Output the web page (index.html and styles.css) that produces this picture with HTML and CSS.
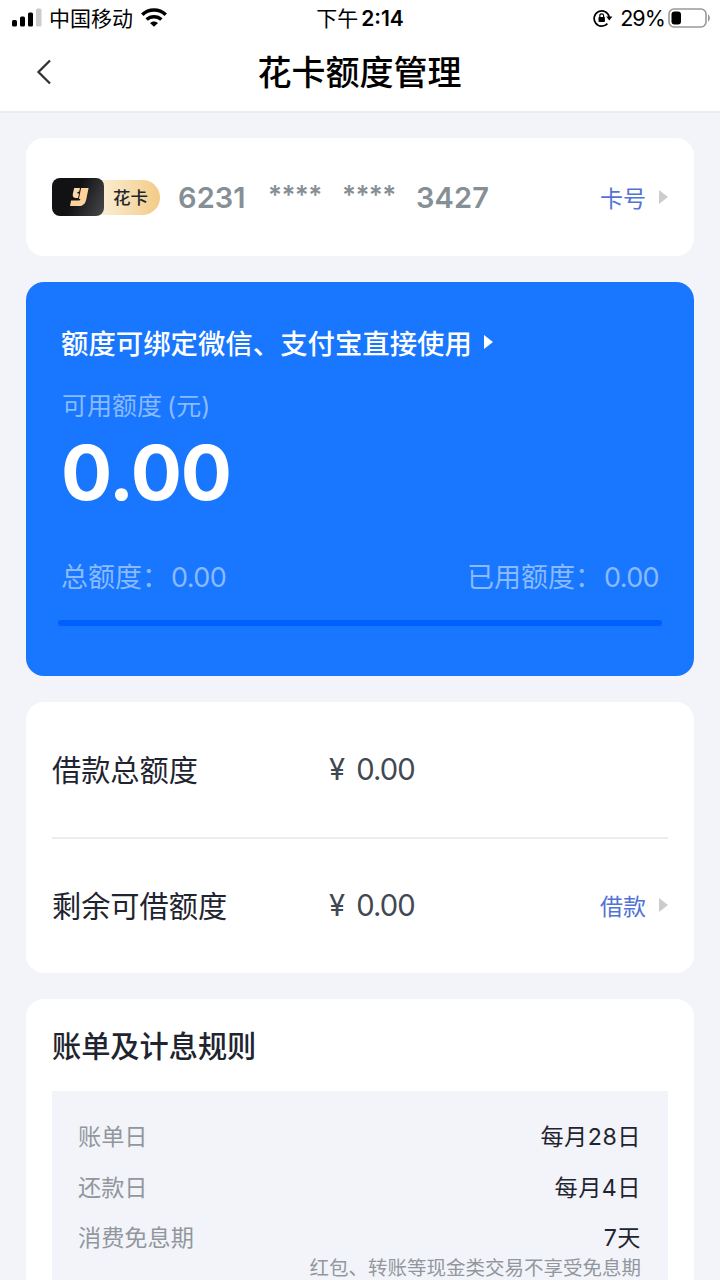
FILE: index.html
```html
<!DOCTYPE html>
<html lang="zh-CN">

<head>
  <meta charset="UTF-8">
  <meta name="viewport" content="width=device-width, initial-scale=1.0">
  <title>花卡额度管理</title>
  <link rel="stylesheet" href="styles.css">
</head>

<body>
  <div class="page">
    <!-- 顶部状态栏和标题 -->
    <header class="header">
      <div class="status">
        <div class="status-left">
          <svg class="signal" width="30" height="20" viewBox="0 0 30 20">
            <rect x="0" y="12" width="5" height="6.5" rx="1.5" />
            <rect x="8" y="8.5" width="5" height="10" rx="1.5" />
            <rect x="16" y="4.5" width="5" height="14" rx="1.5" />
            <rect x="24" y="0.5" width="5.5" height="18" rx="1.5" fill="#ccc" />
          </svg>
          <span class="carrier">中国移动</span>
          <svg class="wifi" width="26" height="20" viewBox="0 0 26 20">
            <path d="M1.3 6.7C7.8 0.5 18.2 0.5 24.7 6.7" fill="none" stroke="#000" stroke-width="3.6" />
            <path d="M5.6 11.6C9.8 7.7 16.2 7.7 20.4 11.6" fill="none" stroke="#000" stroke-width="3.4" />
            <path d="M13 18.8L9 15.1C11.2 12.9 14.8 12.9 17 15.1Z" />
          </svg>
        </div>
        <div class="status-time">下午 <b>2:14</b></div>
        <div class="status-right">
          <svg class="lock" width="20" height="18" viewBox="0 0 20 18">
            <path d="M14.4 14.6A7.6 7.6 0 1 1 16.2 8" fill="none" stroke="#000" stroke-width="1.7" />
            <path d="M13.2 7.6H19.4L16.3 11.6Z" />
            <rect x="5.5" y="8" width="6.4" height="5" rx="0.8" />
            <path d="M6.8 8.4V6.8a1.9 1.9 0 0 1 3.8 0V8.4" fill="none" stroke="#000" stroke-width="1.2" />
          </svg>
          <span class="percent">29%</span>
          <svg class="battery" width="43" height="20" viewBox="0 0 43 20">
            <rect x="1" y="1" width="37" height="18" rx="5" fill="none" stroke="#999" stroke-width="1.6" />
            <rect x="3.5" y="3.5" width="9.5" height="13" rx="3" />
            <path d="M40 6.5C42.5 7.5 42.5 12.5 40 13.5Z" fill="#999" />
          </svg>
        </div>
      </div>
      <div class="nav">
        <svg class="back" width="16" height="26" viewBox="0 0 16 26">
          <path d="M14 1.5L2.5 13L14 24.5" fill="none" stroke="#333" stroke-width="2.3" />
        </svg>
        <h1 class="title">花卡额度管理</h1>
      </div>
    </header>

    <main class="content">
      <!-- 卡号 -->
      <section class="card card-no">
        <div class="badge">
          <div class="badge-logo">
            <svg width="20" height="20" viewBox="0 0 20 20">
              <path d="M5.2 1H11L10.2 4.6L8.2 5.2L8.6 6.6H10.1L9.1 11H7C4.6 11 3.3 9.4 3.8 7Z" fill="#fbd9a8" />
              <path d="M12.1 1H19.6L17.3 12.2C16.4 16.8 13.9 19 10 19H1L2.1 13.6H9.6C10.6 13.6 11.2 13 11.4 11.9H9.9Z" fill="#fdd29b" />
            </svg>
          </div>
          <span class="badge-name">花卡</span>
        </div>
        <div class="number">
          <span class="digits">6231</span>
          <span class="stars">****</span>
          <span class="stars">****</span>
          <span class="digits">3427</span>
        </div>
        <a class="link">卡号<i class="arrow"></i></a>
      </section>

      <!-- 可用额度 -->
      <section class="card quota">
        <div class="quota-tip">额度可绑定微信、支付宝直接使用<i class="arrow arrow-white"></i></div>
        <div class="quota-label">可用额度<span class="unit">(元)</span></div>
        <div class="quota-num">0.00</div>
        <div class="quota-detail">
          <div>总额度：<span class="sum">0.00</span></div>
          <div>已用额度：<span class="sum">0.00</span></div>
        </div>
        <div class="progress"></div>
      </section>

      <!-- 借款额度 -->
      <section class="card loan">
        <div class="loan-row">
          <span class="loan-name">借款总额度</span>
          <span class="loan-num"><i class="yen">¥</i>0.00</span>
        </div>
        <div class="loan-row">
          <span class="loan-name">剩余可借额度</span>
          <span class="loan-num"><i class="yen">¥</i>0.00</span>
          <a class="link">借款<i class="arrow"></i></a>
        </div>
      </section>

      <!-- 账单规则 -->
      <section class="card rules">
        <h2 class="rules-title">账单及计息规则</h2>
        <div class="rules-box">
          <div class="rule"><span>账单日</span><b>每月28日</b></div>
          <div class="rule"><span>还款日</span><b>每月4日</b></div>
          <div class="rule"><span>消费免息期</span><b>7天</b></div>
          <p class="note">红包、转账等现金类交易不享受免息期</p>
        </div>
      </section>
    </main>
  </div>
</body>

</html>
```
FILE: styles.css
```css
* {
  box-sizing: border-box;
  margin: 0;
  padding: 0;
}

body {
  background-color: #f3f4f9;
  font-family: Inter, "Noto Sans CJK SC", sans-serif;
  color: #1f2530;
}

i {
  font-style: normal;
}

svg {
  display: block;
  flex-shrink: 0;
}

.page {
  width: 720px;
  height: 1280px;
  overflow: hidden;
}

/* 顶部 */
.header {
  height: 113px;
  background-color: #fff;
  border-bottom: 2px solid #ebecef;
  color: #000;
}

.status {
  display: grid;
  grid-template-columns: 1fr auto 1fr;
  align-items: center;
  height: 36px;
  padding: 0 9px 0 12px;
  font-size: 21px;
}

.status-left,
.status-right {
  display: flex;
  align-items: center;
}

.status-right {
  justify-content: flex-end;
}

.carrier {
  margin: 0 8px 0 7px;
  padding-bottom: 2px;
}

.status-time {
  padding: 0 3px 2px 0;
  word-spacing: -3px;
}

.status-time b {
  font-weight: 600;
}

.percent {
  margin: 0 3px 0 9px;
  letter-spacing: -0.9px;
  font-size: 21.5px;
}

.lock {
  margin-right: -2px;
}

.nav {
  display: grid;
  grid-template-columns: 60px 1fr 60px;
  align-items: center;
  height: 72px;
  padding: 0 36px;
}

.title {
  padding: 0 1px 4px 0;
  font-size: 34px;
  font-weight: 500;
  text-align: center;
}

/* 内容 */
.content {
  display: flex;
  flex-direction: column;
  gap: 26px;
  padding: 25px 26px 0;
}

.card {
  border-radius: 18px;
  background-color: #fff;
}

.card-no {
  display: flex;
  align-items: center;
  height: 118px;
  padding: 0 26px;
}

.badge {
  display: flex;
  align-items: center;
  width: 108px;
  height: 35px;
  border-radius: 9px 18px 18px 9px;
  background: linear-gradient(90deg, #faecd0 48%, #f2cb86);
}

.badge-logo {
  display: flex;
  align-items: center;
  justify-content: center;
  width: 52px;
  height: 38px;
  padding-left: 2px;
  border-radius: 8px;
  background: linear-gradient(115deg, #121214 45%, #4a4a4c);
}

.badge-name {
  margin-left: 9px;
  padding-bottom: 1px;
  font-size: 17.5px;
  font-weight: 500;
}

.number {
  display: flex;
  align-items: center;
  margin-left: 18px;
  color: #868f96;
  font-weight: 600;
}

.digits {
  width: 73px;
  font-size: 29px;
  letter-spacing: 0.1px;
}

/* 星号比数字小一些，位置略靠上 */
.stars {
  width: 74px;
  padding-bottom: 5px;
  font-size: 26px;
  line-height: 34px;
  letter-spacing: -0.6px;
}

.digits + .stars {
  margin-left: 17px;
}

.link {
  display: flex;
  align-items: center;
  margin-left: auto;
  padding-bottom: 1px;
  font-size: 23px;
  color: #5272d4;
}

.arrow {
  margin-left: 13px;
  border-left: 9px solid #ccc;
  border-top: 7.5px solid transparent;
  border-bottom: 7.5px solid transparent;
}

.quota {
  height: 394px;
  padding: 40px 32px 0;
  background-color: #1876ff;
  color: #8abaff;
}

.quota-tip {
  display: flex;
  align-items: center;
  height: 40px;
  padding-left: 3px;
  color: #fff;
  font-size: 27.4px;
  font-weight: 500;
}

.arrow-white {
  margin-left: 12px;
  border-left-color: #fff;
}

.quota-label {
  height: 36px;
  margin-top: 26px;
  padding-left: 4px;
  line-height: 36px;
  font-size: 25px;
}

.unit {
  margin-left: 5px;
}

.quota-num {
  height: 90px;
  margin-top: 3px;
  padding-left: 3px;
  line-height: 90px;
  color: #fff;
  font-size: 76px;
  font-weight: 650;
  letter-spacing: -1.2px;
}

.quota-detail {
  display: flex;
  justify-content: space-between;
  height: 40px;
  margin-top: 41px;
  padding: 0 3px;
  line-height: 40px;
  font-size: 27px;
}

.sum {
  margin-left: 2px;
  letter-spacing: -0.6px;
}

.progress {
  height: 6px;
  margin-top: 22px;
  border-radius: 3px;
  background-color: #005fff;
}

.loan {
  height: 271px;
  padding: 0 26px;
}

.loan-row {
  display: flex;
  align-items: center;
  height: 135px;
  font-size: 29.2px;
}

.loan-row + .loan-row {
  border-top: 2px solid #ebecee;
}

.loan-name {
  width: 277px;
  padding-bottom: 3px;
}

.loan-num {
  color: #414853;
  letter-spacing: -0.9px;
}

.yen {
  margin-right: 12px;
}

.rules {
  padding: 26px 26px 0;
}

.rules-title {
  height: 44px;
  line-height: 44px;
  font-size: 29.2px;
  font-weight: 500;
}

.rules-box {
  height: 300px;
  margin-top: 22px;
  padding: 21px 27px 0 26px;
  background-color: #f3f4f9;
  color: #92979e;
}

.rule {
  display: flex;
  justify-content: space-between;
  height: 50.5px;
  line-height: 50.5px;
  font-size: 23.2px;
}

.rule b {
  color: #1f2530;
  font-weight: 400;
  letter-spacing: 0.5px;
}

.note {
  height: 28px;
  margin-top: -10px;
  line-height: 28px;
  text-align: right;
  font-size: 19.5px;
}
```
